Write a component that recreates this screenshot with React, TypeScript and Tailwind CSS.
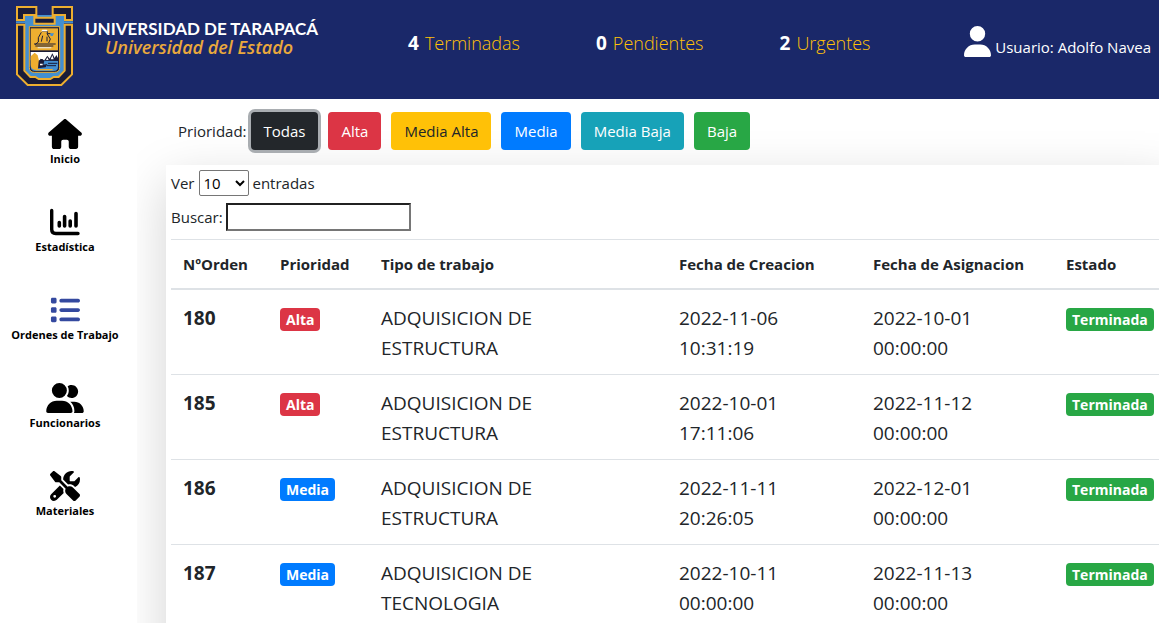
import { FaHouse, FaList, FaUserGroup, FaScrewdriverWrench, FaUser } from "react-icons/fa6";

function ChartIcon() {
  return (
    <svg viewBox="0 0 32 30" className="h-[30px] w-8 shrink-0" fill="none" stroke="currentColor" strokeLinecap="round" aria-hidden="true">
      <path d="M2.7 3.5V22.5Q2.7 26.5 6.7 26.5H29" strokeWidth="3.4" />
      <path d="M10.3 15.5V19M15.6 9.5V19M21.2 14V19M27 6.5V19" strokeWidth="3.6" />
    </svg>
  );
}

function Crest() {
  return (
    <svg viewBox="12 12 171 240" className="h-20 w-[57px] shrink-0" aria-hidden="true">
      {/* ribbon behind the shield */}
      <path d="M39 39H156V205L138 225H122L112 234H82L72 225H57L39 205Z" fill="#438fd0" />
      <path d="M12 61H40M155 61H183" stroke="#438fd0" strokeWidth="6" />
      {/* upper band */}
      <path d="M15 15H73V47H122V15H180V54H159V39H128V65H67V39H36V54H15Z" fill="#1a1c38" stroke="#edae30" strokeWidth="6" />
      {/* lower band */}
      <path d="M15 68H37V206L55 225H70L80 231H115L125 225H140L158 206V68H180V217L148 249H47L15 217Z" fill="#1a1c38" stroke="#edae30" strokeWidth="6" />
      {/* shield */}
      <path d="M52 74H143V196Q143 211 128 211H67Q52 211 52 196Z" fill="#1a1c38" stroke="#edae30" strokeWidth="3" />
      <path d="M56 79H138V145H56Z" fill="#edae30" />
      <path d="M90 87H106V95H116M88 91L79 107V120L69 128M105 95L115 111L110 123M92 101L88 119M105 104V118M66 126H131M70 132H124" fill="none" stroke="#1a1c38" strokeWidth="3" />
      <path d="M91 83H104L108 88H88Z" fill="#fff" />
      <path d="M114 94H126L122 102H116Z" fill="#438fd0" />
      <path d="M77 137H118" stroke="#e9dfc8" strokeWidth="4" />
      <path d="M56 150H138V175H56Z" fill="#fff" />
      <path d="M56 175H138V194Q138 207 125 207H70Q56 207 56 194Z" fill="#438fd0" />
      <path d="M56 163L68 152L77 160L84 190L75 204Q56 204 56 188Z" fill="#edae30" />
      <path d="M96 176L106 161L113 170L121 154L128 168L133 159L138 168V177Z" fill="#1a1c38" />
      <path d="M106 166L110 174H102ZM121 160L125 172H116Z" fill="#fff" />
      <path d="M80 178L88 168L97 176L94 188L106 186L101 196L78 199Z" fill="#1a1c38" />
      <path d="M86 165H95V171H86ZM84 185H92V190H84Z" fill="#fff" />
      <path d="M108 184H136M105 191H132" stroke="#1a1c38" strokeWidth="3" />
      <path d="M72 203H122" stroke="#edae30" strokeWidth="4" />
    </svg>
  );
}

const stats = [
  { n: 4, label: "Terminadas" },
  { n: 0, label: "Pendientes" },
  { n: 2, label: "Urgentes" },
];

const nav = [
  { label: "Inicio", icon: <FaHouse className="h-[30px] w-[34px] shrink-0" /> },
  { label: "Estadística", icon: <ChartIcon /> },
  { label: "Ordenes de Trabajo", icon: <FaList className="size-[30px] shrink-0 text-[#34499f]" /> },
  { label: "Funcionarios", icon: <FaUserGroup className="h-[30px] w-[38px] shrink-0" /> },
  { label: "Materiales", icon: <FaScrewdriverWrench className="size-[30px] shrink-0" /> },
];

const filters = [
  { label: "Todas", style: "bg-[#23272b] text-white ring-3 ring-[#a9adb1]" },
  { label: "Alta", style: "bg-[#dc3545] text-white" },
  { label: "Media Alta", style: "bg-[#ffc107] text-[#212529]" },
  { label: "Media", style: "bg-[#007bff] text-white" },
  { label: "Media Baja", style: "bg-[#17a2b8] text-white" },
  { label: "Baja", style: "bg-[#28a745] text-white" },
];

const rows = [
  { id: 180, p: "Alta", type: ["ADQUISICION DE", "ESTRUCTURA"], made: ["2022-11-06", "10:31:19"], given: ["2022-10-01", "00:00:00"] },
  { id: 185, p: "Alta", type: ["ADQUISICION DE", "ESTRUCTURA"], made: ["2022-10-01", "17:11:06"], given: ["2022-11-12", "00:00:00"] },
  { id: 186, p: "Media", type: ["ADQUISICION DE", "ESTRUCTURA"], made: ["2022-11-11", "20:26:05"], given: ["2022-12-01", "00:00:00"] },
  { id: 187, p: "Media", type: ["ADQUISICION DE", "TECNOLOGIA"], made: ["2022-10-11", "00:00:00"], given: ["2022-11-13", "00:00:00"] },
];

function Badge({ text }: { text: string }) {
  const color = text === "Alta" ? "bg-[#dc3545]" : text === "Media" ? "bg-[#007bff]" : "bg-[#28a745]";
  return <span className={`inline-block rounded px-1.5 text-[14px] leading-[23px] font-bold text-white ${color}`}>{text}</span>;
}

function Lines({ parts }: { parts: string[] }) {
  return (
    <td className="px-3 pt-[13px] pb-[11px] align-top">
      {parts[0]}
      <br />
      {parts[1]}
    </td>
  );
}

export default function App() {
  return (
    <div className="flex h-screen flex-col overflow-hidden bg-white font-['Open_Sans','Noto_Sans',sans-serif] text-[15px] leading-6 text-[#212529]">
      <header className="flex h-[99px] shrink-0 items-start bg-[#1a2869] pr-2 pl-4 text-white">
        <div className="flex w-[392px] gap-3 pt-1.5">
          <Crest />
          <div className="pt-3.5 whitespace-nowrap">
            <div className="font-[Lato,sans-serif] text-[17px] leading-[18px] font-bold">UNIVERSIDAD DE TARAPACÁ</div>
            <div className="pl-5 font-['Open_Sans',sans-serif] text-[18px] leading-[18px] font-semibold text-[#eaa93c] italic">Universidad del Estado</div>
          </div>
        </div>
        <ul className="flex gap-19 pt-7 text-[18px] leading-[30px]">
          {stats.map((s) => (
            <li key={s.label} className="flex gap-1.5 whitespace-nowrap">
              <b className="text-[19px]">{s.n}</b>
              <span className="font-light text-[#ffc107]">{s.label}</span>
            </li>
          ))}
        </ul>
        <div className="ml-auto flex items-end gap-1 pt-[26px] whitespace-nowrap">
          <FaUser className="h-[31px] w-[27px]" />
          <span className="leading-5">Usuario: Adolfo Navea</span>
        </div>
      </header>
      <div className="flex min-h-0 flex-1">
        <nav className="w-[137px] shrink-0 pt-5 pr-[7px]">
          <ul className="flex flex-col gap-10">
            {nav.map((n) => (
              <li key={n.label}>
                <a href="#" className="flex h-12 flex-col items-center text-[11px] leading-5 font-bold whitespace-nowrap text-black">
                  {n.icon}
                  {n.label}
                </a>
              </li>
            ))}
          </ul>
        </nav>
        <main className="min-w-0 flex-1 overflow-hidden pl-[29px]">
          <div className="flex items-center gap-[10px] pt-[13px] pl-3">
            <span className="-mr-1.5">Prioridad:</span>
            {filters.map((f) => (
              <button key={f.label} type="button" className={`h-[38px] rounded px-[13px] whitespace-nowrap ${f.style}`}>
                {f.label}
              </button>
            ))}
          </div>
          <section className="mt-[15px] h-full min-w-[1010px] bg-white pt-[5px] pl-[5px] shadow-[0_16px_48px_rgba(0,0,0,0.175)]">
            <label className="flex items-center gap-1">
              Ver
              <select className="h-[26px] w-[50px] rounded-[2px] border border-[#767676] bg-white text-black">
                <option>10</option>
              </select>
              <span>entradas</span>
            </label>
            <label className="mt-[7px] flex items-center gap-[3px]">
              Buscar:
              <input type="search" className="h-7 w-[185px] border-2 border-[#767676] border-t-[#212121] border-l-[#212121] px-1" />
            </label>
            <table className="mt-2 w-full table-fixed border-collapse text-left">
              <colgroup>
                <col className="w-[97px]" />
                <col className="w-[101px]" />
                <col className="w-[298px]" />
                <col className="w-[194px]" />
                <col className="w-[193px]" />
                <col />
              </colgroup>
              <thead>
                <tr className="border-t border-b-2 border-t-[#dee2e6] border-b-[#dee2e6] whitespace-nowrap">
                  <th className="p-3">NºOrden</th>
                  <th className="p-3">Prioridad</th>
                  <th className="p-3">Tipo de trabajo</th>
                  <th className="p-3">Fecha de Creacion</th>
                  <th className="p-3">Fecha de Asignacion</th>
                  <th className="p-3">Estado</th>
                </tr>
              </thead>
              <tbody className="text-[19px] leading-[30px]">
                {rows.map((r) => (
                  <tr key={r.id} className="border-b border-[#dee2e6]">
                    <th className="px-3 pt-[13px] pb-[11px] align-top">{r.id}</th>
                    <td className="px-3 pt-[13px] pb-[11px] align-top"><Badge text={r.p} /></td>
                    <Lines parts={r.type} />
                    <Lines parts={r.made} />
                    <Lines parts={r.given} />
                    <td className="px-3 pt-[13px] pb-[11px] align-top"><Badge text="Terminada" /></td>
                  </tr>
                ))}
              </tbody>
            </table>
          </section>
        </main>
      </div>
    </div>
  );
}
